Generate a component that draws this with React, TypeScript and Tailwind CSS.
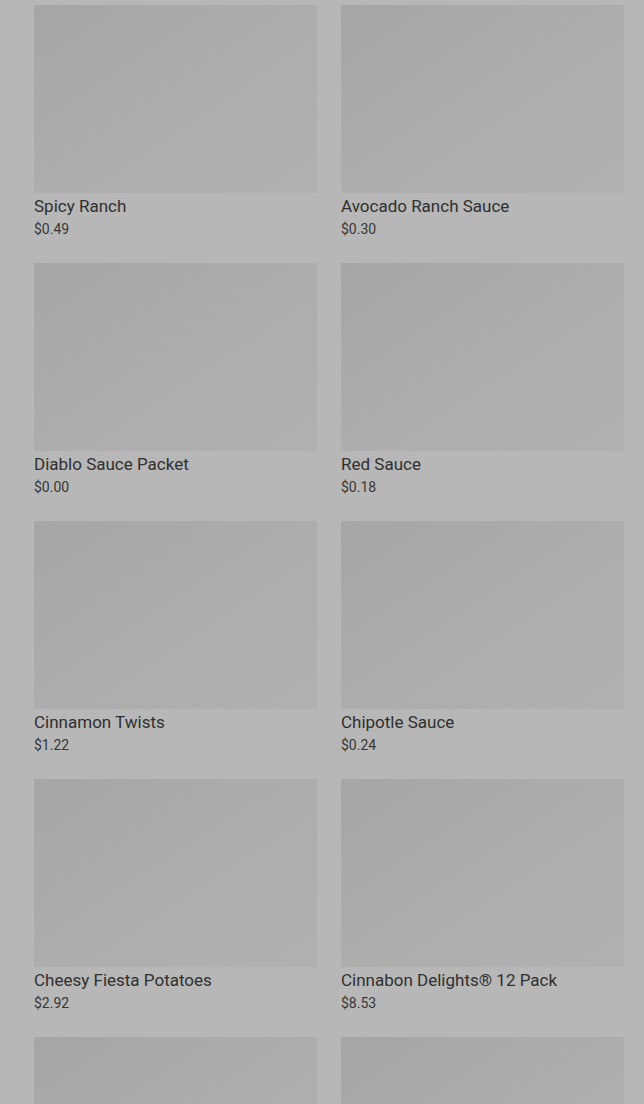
const items = [
  { name: 'Spicy Ranch', price: '$0.49' },
  { name: 'Avocado Ranch Sauce', price: '$0.30' },
  { name: 'Diablo Sauce Packet', price: '$0.00' },
  { name: 'Red Sauce', price: '$0.18' },
  { name: 'Cinnamon Twists', price: '$1.22' },
  { name: 'Chipotle Sauce', price: '$0.24' },
  { name: 'Cheesy Fiesta Potatoes', price: '$2.92' },
  { name: 'Cinnabon Delights® 12 Pack', price: '$8.53' },
];

function ProductCard({ name, price }: { name?: string; price?: string }) {
  return (
    <div className="flex flex-col">
      <div className="h-[188px] w-full bg-gradient-to-br from-[#a6a6a6] via-[#adadad] to-[#b0b0b0]" />
      {name && (
        <>
          <p className="mt-[3px] text-[17px] leading-[21px] font-normal text-[#303030]">{name}</p>
          <p className="mt-[3px] text-[14px] leading-[18px] text-[#383838]">{price}</p>
        </>
      )}
    </div>
  );
}

export default function App() {
  return (
    <div
      className="h-[1104px] overflow-hidden bg-[#b7b7b7] pt-[5px] pl-[34px] pr-[20px]"
      style={{ fontFamily: 'Roboto, "Liberation Sans", sans-serif' }}
    >
      <div className="grid grid-cols-2 gap-x-[24px] gap-y-[25px]">
        {items.map((item) => (
          <ProductCard key={item.name} {...item} />
        ))}
        <ProductCard />
        <ProductCard />
      </div>
    </div>
  );
}
